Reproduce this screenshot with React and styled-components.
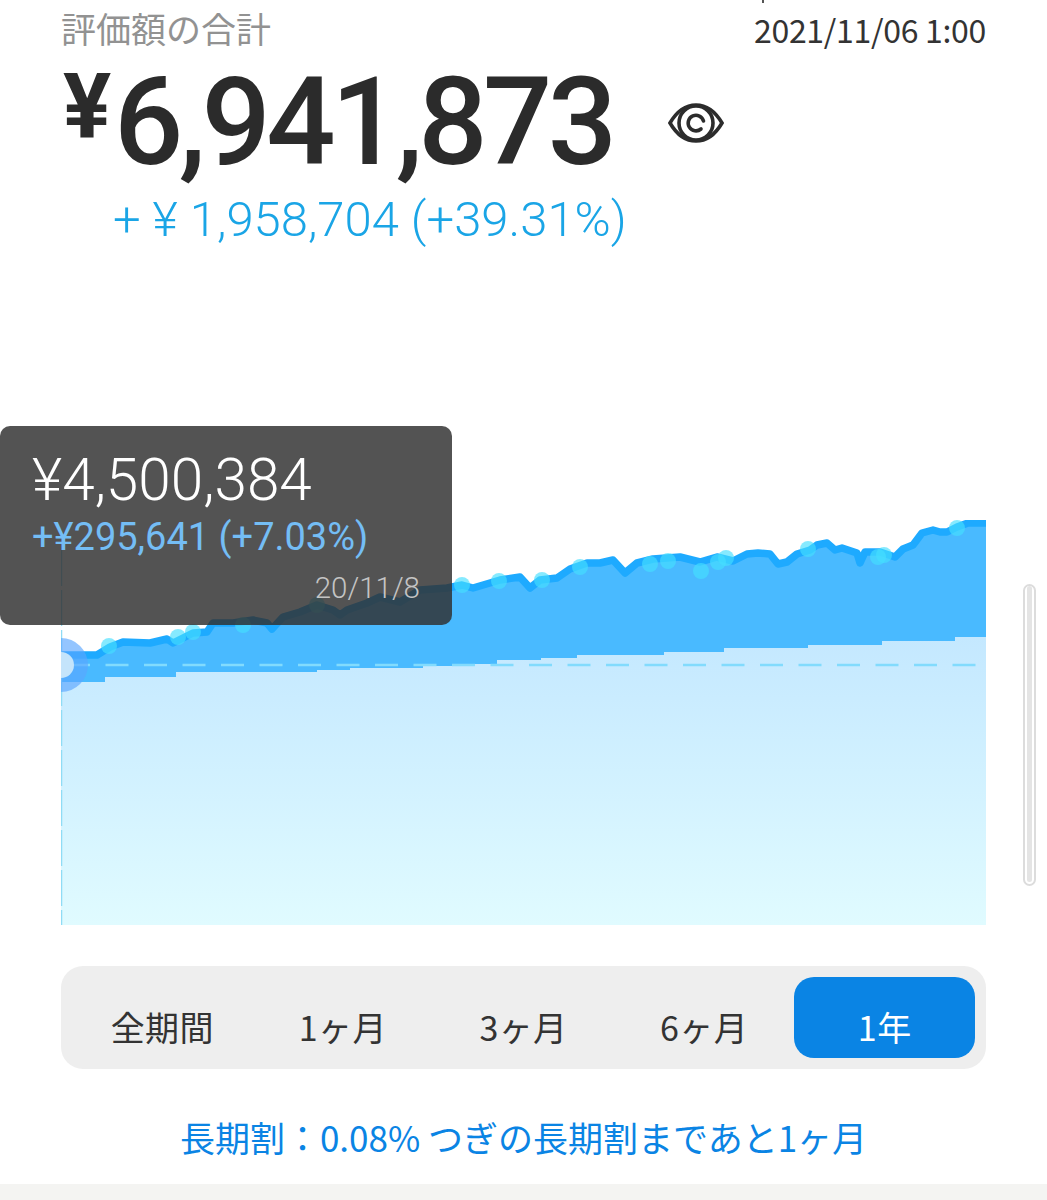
import React from 'react'
import styled, { createGlobalStyle } from 'styled-components'

const GlobalStyle = createGlobalStyle`
  html, body { margin: 0; padding: 0; background: #fff; }
  body { font-family: "Noto Sans CJK JP", "Roboto", sans-serif; }
`

const Page = styled.div`
  position: relative;
  width: 1047px;
  height: 1200px;
  overflow: hidden;
  display: flex;
  flex-direction: column;
  background: #fff;
`
const Header = styled.header`
  height: 250px;
  padding: 0 61px;
  box-sizing: border-box;
`
const TopRow = styled.div`
  display: flex;
  justify-content: space-between;
  align-items: flex-start;
  height: 62px;
`
const Label = styled.div`
  font-size: 35px;
  line-height: 56px;
  font-weight: 400;
  color: #929292;
`
const Stamp = styled.div`
  font-family: "Noto Sans CJK JP", sans-serif;
  font-size: 32px;
  line-height: 58px;
  letter-spacing: -0.3px;
  color: #333;
`
const TotalRow = styled.div`
  display: flex;
  align-items: flex-start;
  height: 122px;
`
const Yen = styled.span`
  font-family: "Roboto", sans-serif;
  font-weight: 700;
  font-size: 90px;
  line-height: 92px;
  width: 52px;
  padding-left: 2px;
  color: #2b2b2b;
`
const Total = styled.span`
  font-family: "Roboto", sans-serif;
  font-weight: 500;
  font-size: 122px;
  line-height: 122px;
  letter-spacing: -4.6px;
  margin-left: -1px;
  color: #2b2b2b;
`
const EyeButton = styled.span`
  display: flex;
  margin: 40px 0 0 55px;
`
const Gain = styled.div`
  font-family: "Roboto", sans-serif;
  font-weight: 300;
  font-size: 49px;
  line-height: 60px;
  padding-left: 52px;
  margin-top: 6px;
  white-space: pre;
  color: #1aa5e6;
`
const ChartArea = styled.section`
  position: relative;
  height: 716px;
  box-sizing: border-box;
  padding: 270px 61px 0;
`
const Plot = styled.svg`
  display: block;
  width: 925px;
  height: 405px;
`
const Tooltip = styled.div`
  position: absolute;
  left: 0;
  top: 176px;
  width: 452px;
  height: 199px;
  box-sizing: border-box;
  padding: 23px 32px 0;
  border-radius: 10px;
  background: rgba(48, 48, 48, 0.83);
  font-family: "Roboto", sans-serif;
  font-weight: 300;
`
const TipValue = styled.div`
  font-size: 58.5px;
  line-height: 62px;
  color: #fff;
`
const TipGain = styled.div`
  font-size: 38px;
  line-height: 48px;
  margin-top: 2px;
  font-weight: 400;
  color: #74bdf5;
`
const TipDate = styled.div`
  font-size: 29.5px;
  line-height: 36px;
  margin-top: 9px;
  text-align: right;
  color: #c4c4c4;
`
const Scrollbar = styled.div`
  position: absolute;
  left: 1023px;
  top: 584px;
  width: 13px;
  height: 302px;
  box-sizing: border-box;
  border: 2px solid #dcdcdc;
  border-radius: 7px;
  background: #fff;
  &::after {
    content: "";
    display: block;
    width: 5px;
    height: 296px;
    margin-left: 2px;
    border-radius: 3px;
    background: #e4e4e4;
  }
`
const Periods = styled.nav`
  display: grid;
  grid-template-columns: repeat(5, 1fr);
  margin: 0 61px;
  padding: 11px;
  height: 103px;
  box-sizing: border-box;
  background: #eee;
  border-radius: 22px;
`
const Period = styled.div`
  display: flex;
  align-items: center;
  justify-content: center;
  padding-top: 18px;
  box-sizing: border-box;
  height: 81px;
  border-radius: 20px;
  font-size: 34px;
  letter-spacing: 0.4px;
  background: ${p => (p.$active ? '#0a84e4' : 'transparent')};
  color: ${p => (p.$active ? '#fff' : '#333')};
`
const Discount = styled.div`
  height: 115px;
  padding-top: 20px;
  box-sizing: border-box;
  display: flex;
  align-items: center;
  justify-content: center;
  font-size: 35px;
  white-space: pre;
  color: #0a84e4;
`
const BottomStrip = styled.div`
  flex: 1;
  background: #f4f4f2;
`
const Tick = styled.span`
  position: absolute;
  left: 762px;
  top: 0;
  width: 2px;
  height: 3px;
  background: #555;
`

const LINE = [
  [0, 135], [36, 135], [49, 127], [62, 122], [89, 123], [106, 119], [112, 123], [132, 113], [146, 112],
  [152, 103], [172, 103], [192, 100], [206, 103], [211, 109], [222, 97], [239, 92], [256, 85], [272, 90],
  [279, 95], [286, 90], [306, 83], [319, 77], [339, 82], [359, 70], [386, 68], [401, 65], [412, 68],
  [439, 60], [459, 57], [469, 68], [479, 60], [496, 58], [509, 49], [526, 43], [539, 43], [552, 40],
  [564, 53], [576, 43], [592, 39], [619, 37], [639, 42], [656, 37], [672, 41], [686, 34], [697, 33],
  [709, 34], [717, 44], [726, 42], [736, 34], [749, 30], [756, 25], [766, 23], [774, 30], [781, 28],
  [796, 33], [799, 43], [804, 32], [819, 32], [834, 37], [842, 29], [852, 25], [861, 13], [872, 10],
  [879, 12], [886, 12], [896, 7], [907, 3], [925, 3],
]
const STEPS = [
  [0, 162], [44, 157], [115, 152], [256, 150], [289, 148], [362, 146], [399, 144], [436, 140],
  [480, 138], [516, 135], [603, 132], [663, 128], [747, 125], [821, 121], [894, 117],
]
const BUBBLES = [
  [48, 126], [117, 117], [132, 112], [182, 105], [256, 85], [401, 65], [438, 61], [481, 60], [519, 47],
  [589, 44], [607, 41], [640, 51], [657, 42], [665, 38], [747, 29], [817, 37], [823, 35], [896, 8],
]

const linePath = LINE.map(([x, y]) => `${x},${y}`).join(' ')
const stepPath = STEPS.map(([x, y], i) => {
  const next = STEPS[i + 1] ? STEPS[i + 1][0] : 925
  return `${x},${y} ${next},${y}`
}).join(' ')

const EyeIcon = () => (
  <svg width="56" height="42" viewBox="0 0 56 42" fill="none" stroke="#2c2c2c" strokeWidth="3.6" strokeLinecap="round">
    <path d="M2 21C9 9 18 3 28 3s19 6 26 18c-7 12-16 18-26 18S9 33 2 21z" />
    <circle cx="28" cy="21" r="17" />
    <path d="M35.5 19a7.8 7.8 0 1 0-2.5 8" />
  </svg>
)

const Chart = () => (
  <Plot viewBox="0 0 925 405">
    <defs>
      <linearGradient id="lower" x1="0" y1="0" x2="0" y2="1">
        <stop offset="0" stopColor="#c4e8ff" />
        <stop offset="1" stopColor="#e0fbff" />
      </linearGradient>
    </defs>
    <polygon points={`${linePath} 925,405 0,405`} fill="#49baff" />
    <polygon points={`${stepPath} 925,405 0,405`} fill="url(#lower)" />
    <polyline points={linePath} fill="none" stroke="#1eaaff" strokeWidth="7.5" strokeLinejoin="round" strokeLinecap="round" />
    <line x1="6" y1="145" x2="920" y2="145" stroke="#82dbfd" strokeWidth="2.5" strokeDasharray="23 15.5" />
    <line x1="0.5" y1="30" x2="0.5" y2="405" stroke="#8fdcf5" strokeWidth="1.5" strokeDasharray="36 4" />
    {BUBBLES.map(([x, y]) => (
      <circle key={`${x}-${y}`} cx={x} cy={y} r="8" fill="#45deff" fillOpacity="0.65" />
    ))}
    <circle cx="0" cy="145" r="27" fill="#5aa6ff" fillOpacity="0.65" />
    <circle cx="0" cy="145" r="13" fill="#c4e4fb" />
  </Plot>
)

export default function App() {
  return (
    <Page>
      <GlobalStyle />
      <Tick />
      <Header>
        <TopRow>
          <Label>評価額の合計</Label>
          <Stamp>2021/11/06 1:00</Stamp>
        </TopRow>
        <TotalRow>
          <Yen>¥</Yen>
          <Total>6,941,873</Total>
          <EyeButton><EyeIcon /></EyeButton>
        </TotalRow>
        <Gain>+ ¥ 1,958,704 (+39.31%)</Gain>
      </Header>
      <ChartArea>
        <Chart />
        <Tooltip>
          <TipValue>¥4,500,384</TipValue>
          <TipGain>+¥295,641 (+7.03%)</TipGain>
          <TipDate>20/11/8</TipDate>
        </Tooltip>
      </ChartArea>
      <Periods>
        <Period>全期間</Period>
        <Period>1ヶ月</Period>
        <Period>3ヶ月</Period>
        <Period>6ヶ月</Period>
        <Period $active>1年</Period>
      </Periods>
      <Discount>長期割：0.08% つぎの長期割まであと1ヶ月</Discount>
      <BottomStrip />
      <Scrollbar />
    </Page>
  )
}
